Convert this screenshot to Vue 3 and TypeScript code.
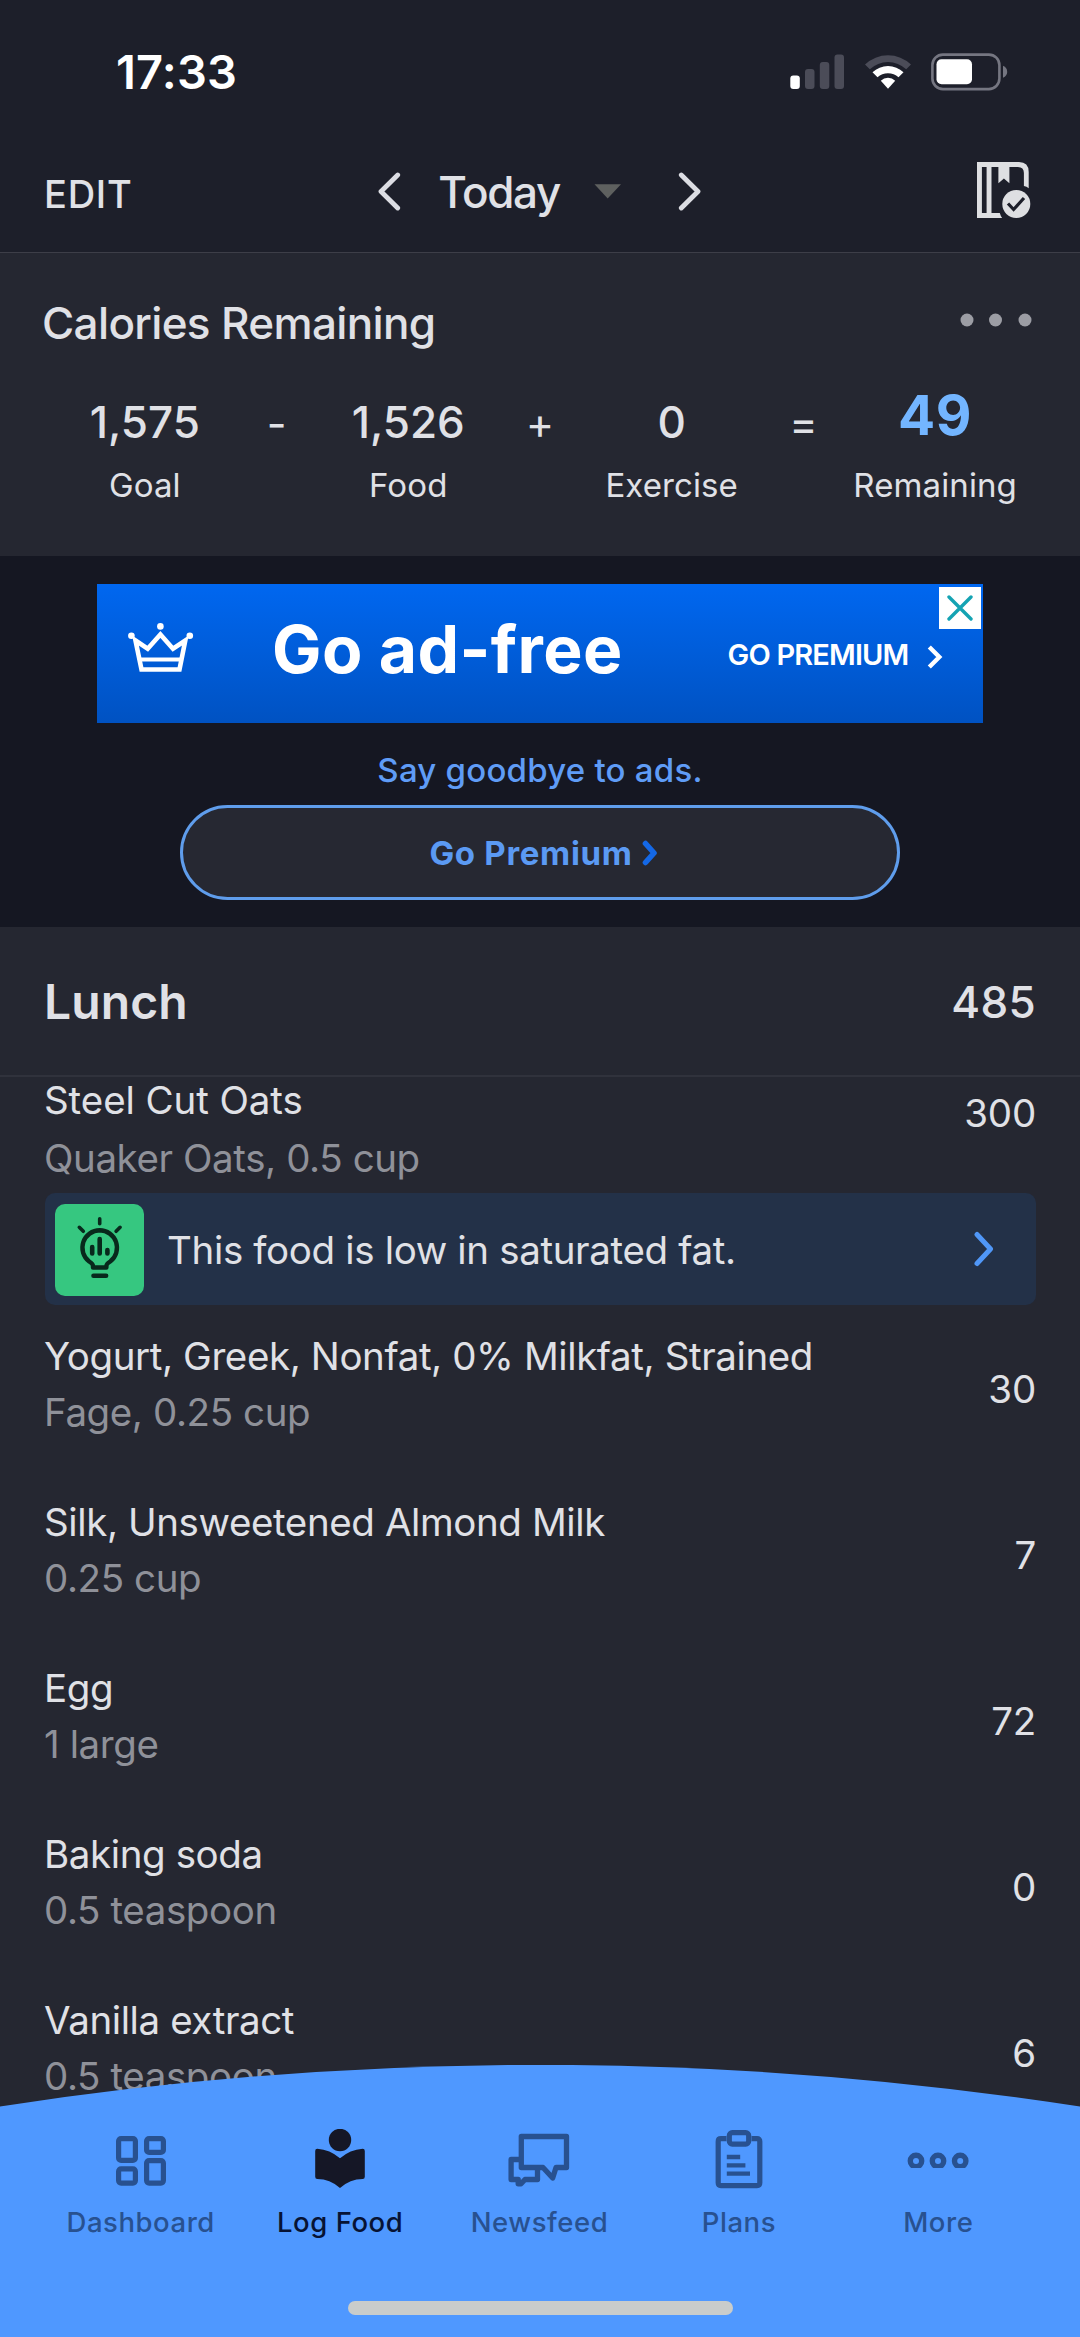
<script setup lang="ts">
interface Food {
  name: string
  detail: string
  calories: number
}

interface Tab {
  id: 'dashboard' | 'log' | 'news' | 'plans' | 'more'
  label: string
  active?: boolean
}

const foods: Food[] = [
  { name: 'Yogurt, Greek, Nonfat, 0% Milkfat, Strained', detail: 'Fage, 0.25 cup', calories: 30 },
  { name: 'Silk, Unsweetened Almond Milk', detail: '0.25 cup', calories: 7 },
  { name: 'Egg', detail: '1 large', calories: 72 },
  { name: 'Baking soda', detail: '0.5 teaspoon', calories: 0 },
  { name: 'Vanilla extract', detail: '0.5 teaspoon', calories: 6 },
]

const tabs: Tab[] = [
  { id: 'dashboard', label: 'Dashboard' },
  { id: 'log', label: 'Log Food', active: true },
  { id: 'news', label: 'Newsfeed' },
  { id: 'plans', label: 'Plans' },
  { id: 'more', label: 'More' },
]
</script>

<template>
  <div class="screen">
    <header class="header">
      <div class="status">
        <span class="time">17:33</span>
        <div class="status-icons">
          <svg class="signal" width="55" height="36" viewBox="0 0 55 36">
            <rect x="0.3" y="21.5" width="9.5" height="13.5" rx="3" fill="#fff" />
            <rect x="15" y="15" width="9.5" height="20" rx="3" fill="#4b4c58" />
            <rect x="29.8" y="8" width="9.5" height="27" rx="3" fill="#4b4c58" />
            <rect x="44.5" y="0.5" width="9.5" height="34.5" rx="3" fill="#4b4c58" />
          </svg>
          <svg class="wifi" width="48" height="36" viewBox="0 0 48 36">
            <path d="M1 10.5a33.5 33.5 0 0 1 46 0l-4.800 4.800a26.500 26.500 0 0 0-36.400 0z" fill="#4b4c58" />
            <path d="M8.5 18.300a22.500 22.500 0 0 1 31 0l-5 5a15.300 15.300 0 0 0-21 0z" fill="#fff" />
            <path d="M16.8 26.700a10.500 10.500 0 0 1 14.400 0L24 34.800z" fill="#fff" />
          </svg>
          <svg class="battery" width="77" height="38" viewBox="0 0 77 38">
            <rect x="1.4" y="1.6" width="67" height="34.5" rx="10.5" fill="none" stroke="#757681" stroke-width="2.6" />
            <rect x="5.5" y="6.3" width="35.5" height="25" rx="5" fill="#fff" />
            <path d="M72 12.700c5.600 1.800 5.600 10.200 0 12z" fill="#757681" />
          </svg>
        </div>
      </div>
      <div class="toolbar">
        <span class="edit">EDIT</span>
        <div class="date-nav">
          <svg width="23" height="39" viewBox="0 0 23 39" fill="none" stroke="#dcdde3" stroke-width="4.8" stroke-linecap="round" stroke-linejoin="round">
            <path d="M19.700 3L3 19.500 19.700 36" />
          </svg>
          <span class="today">Today</span>
          <svg class="caret" width="28" height="15" viewBox="0 0 28 15"><path d="M0.500 0.300h26.500L13.700 14.400z" fill="#5e605f" /></svg>
          <svg width="23" height="39" viewBox="0 0 23 39" fill="none" stroke="#dcdde3" stroke-width="4.8" stroke-linecap="round" stroke-linejoin="round">
            <path d="M3.300 3L20 19.500 3.300 36" />
          </svg>
        </div>
        <svg class="diary" width="54" height="57" viewBox="0 0 54 57">
          <path d="M0 0h42q9.700 0 9.700 10v16.300q-2-1.800-4.800-2.300V11q0-6-6-6H32.400v16.300l-5.500-4.700-5.500 4.700V5h-6.900v46h8.300q.8 3 2.300 5H0zM4.900 5v46h4.700V5z" fill="#dedfe2" fill-rule="evenodd" />
          <circle cx="39.3" cy="42" r="14" fill="#dedfe2" />
          <path d="M31 41.500l5.600 6L47 36" fill="none" stroke="#1d1f2a" stroke-width="3.2" />
        </svg>
      </div>
    </header>

    <section class="summary">
      <div class="summary-head">
        <h2>Calories Remaining</h2>
        <svg width="74" height="14" viewBox="0 0 74 14" fill="#9c9da4">
          <circle cx="8" cy="7" r="6.5" /><circle cx="36.5" cy="7" r="6.5" /><circle cx="66" cy="7" r="6.5" />
        </svg>
      </div>
      <div class="equation">
        <div class="term"><b>1,575</b><span>Goal</span></div>
        <div class="op">-</div>
        <div class="term"><b>1,526</b><span>Food</span></div>
        <div class="op">+</div>
        <div class="term"><b>0</b><span>Exercise</span></div>
        <div class="op">=</div>
        <div class="term total"><b>49</b><span>Remaining</span></div>
      </div>
    </section>

    <section class="promo">
      <div class="banner">
        <svg class="crown" width="66" height="52" viewBox="0 0 66 52" fill="none" stroke="#fff" stroke-width="4.6">
          <path d="M7.500 17.500l12.200 8.200L32.400 11.500 45 25.700l12.300-8.200L51.500 46.500H13.500z" />
          <path d="M11 36.500h43" stroke-width="4" />
          <g fill="#fff" stroke="none"><circle cx="3.4" cy="12.7" r="3.3" /><circle cx="32.4" cy="3.4" r="3.3" /><circle cx="61.8" cy="12.7" r="3.3" /></g>
        </svg>
        <span class="banner-title">Go ad-free</span>
        <span class="banner-cta">GO PREMIUM</span>
        <svg class="banner-arrow" width="16" height="26" viewBox="0 0 16 26"><path d="M2.300 3L12.300 13 2.300 23" fill="none" stroke="#fff" stroke-width="4.4" /></svg>
        <div class="close">
          <svg width="26" height="26" viewBox="0 0 26 26"><path d="M2 2l22 22M24 2L2 24" stroke="#14a3b3" stroke-width="3.4" stroke-linecap="round" /></svg>
        </div>
      </div>
      <p class="goodbye">Say goodbye to ads.</p>
      <div class="premium">
        <span>Go Premium</span>
        <svg width="16" height="26" viewBox="0 0 16 26"><path d="M3.500 3.500l8.500 9.500-8.500 9.500" fill="none" stroke="#1468e6" stroke-width="5.6" stroke-linecap="round" stroke-linejoin="round" /></svg>
      </div>
    </section>

    <section class="meal">
      <div class="meal-head"><h3>Lunch</h3><span>485</span></div>
      <div class="first">
        <div>
          <div class="name">Steel Cut Oats</div>
          <div class="detail">Quaker Oats, 0.5 cup</div>
        </div>
        <div class="cal">300</div>
      </div>
      <div class="tip">
        <div class="tip-icon">
          <svg width="89" height="92" viewBox="0 0 89 92" fill="none" stroke="#08291c" stroke-linecap="round" stroke-linejoin="round">
            <path stroke-width="4.4" d="M44.700 26.300a17.400 17.400 0 0 0-10.500 31.200q3.800 2.500 3.800 4.300v1.700h13.400v-1.700q0-1.800 3.800-4.300A17.400 17.400 0 0 0 44.700 26.300z" />
            <path stroke-width="4.6" d="M38.500 71.800h12.600M37.200 43v6.500M44.700 35v14.500M52.400 46v3.500" />
            <path stroke-width="3.6" d="M44.700 14.700v5M24.300 23.300l4 4M65.100 23.300l-4 4" />
          </svg>
        </div>
        <span>This food is low in saturated fat.</span>
        <svg class="tip-arrow" width="22" height="36" viewBox="0 0 22 36"><path d="M4 3.500L17.500 18 4 32.500" fill="none" stroke="#5097f7" stroke-width="5" stroke-linecap="round" stroke-linejoin="round" /></svg>
      </div>
      <div v-for="food in foods" :key="food.name" class="row">
        <div>
          <div class="name">{{ food.name }}</div>
          <div class="detail">{{ food.detail }}</div>
        </div>
        <div class="cal">{{ food.calories }}</div>
      </div>
    </section>

    <nav class="nav">
      <svg class="curve" width="1080" height="43" viewBox="0 0 1080 43"><path d="M0 41.500A3542 3542 0 0 1 1080 41.500V43H0z" fill="#4f98ff" /></svg>
      <div class="nav-body">
        <div class="tabs">
          <div v-for="tab in tabs" :key="tab.id" class="tab" :class="{ active: tab.active }">
            <svg v-if="tab.id === 'dashboard'" width="50" height="60" viewBox="0 0 50 60" fill="none" stroke="currentColor" stroke-width="5.2">
              <rect x="2.6" y="9.6" width="16.8" height="21.8" rx="2.5" />
              <rect x="2.6" y="39.9" width="16.8" height="14.2" rx="2.5" />
              <rect x="30.6" y="9.6" width="16.8" height="13.8" rx="2.5" />
              <rect x="30.6" y="31.6" width="16.8" height="22.5" rx="2.5" />
            </svg>
            <svg v-else-if="tab.id === 'log'" width="50" height="60" viewBox="0 0 50 60" fill="currentColor">
              <circle cx="25" cy="11" r="11.2" />
              <path d="M2.300 19.700Q15 20.500 25 29.300 35 20.500 47.700 19.700 49.800 19.700 49.800 22V47.700Q49.800 50 47.700 50 35 50 25 59 15 50 2.300 50 .2 50 .2 47.700V22Q.2 19.700 2.300 19.700z" />
            </svg>
            <svg v-else-if="tab.id === 'news'" width="62" height="60" viewBox="0 0 62 60" fill="none" stroke="currentColor" stroke-width="5.3" stroke-linejoin="round">
              <path d="M13.300 7.500H58.500V38.500H48L44.700 49 35 38.500H13.300z" />
              <path d="M13 30.500H3.100V50.500H10.200V54.800H13L17 50.500H29.500V40" />
            </svg>
            <svg v-else-if="tab.id === 'plans'" width="48" height="60" viewBox="0 0 48 60" fill="none" stroke="currentColor" stroke-width="5.2">
              <path d="M11.500 9.700H6Q3.200 9.700 3.200 12.500V53.800Q3.200 56.600 6 56.600H42Q44.800 56.600 44.800 53.800V12.500Q44.800 9.700 42 9.700H36.500" />
              <rect x="14.3" y="3.7" width="19.4" height="11.4" rx="3" />
              <path d="M11.800 28h13.400M11.800 36.300h18.600M11.800 44.700h23.200" stroke-width="4.3" />
            </svg>
            <svg v-else class="more-icon" width="64" height="60" viewBox="0 0 64 60" fill="none" stroke="currentColor" stroke-width="5.4">
              <circle cx="10" cy="32" r="5.7" /><circle cx="32" cy="32" r="5.7" /><circle cx="54.2" cy="32" r="5.7" />
            </svg>
            <span>{{ tab.label }}</span>
          </div>
        </div>
        <div class="home-bar"></div>
      </div>
    </nav>
  </div>
</template>

<style>
body { background: #252731; }
</style>

<style scoped>
.screen {
  position: relative;
  width: 1080px;
  height: 2337px;
  overflow: hidden;
  background: #252731;
  color: #e0e1e6;
  font-family: Inter, 'Liberation Sans', sans-serif;
}
svg { display: block; flex: none; }
h2, h3, p { margin: 0; font-weight: inherit; }

.header { height: 253px; box-sizing: border-box; background: #1d1f2a; border-bottom: 1px solid #3d3e48; }
.status { height: 144px; display: flex; justify-content: space-between; align-items: center; padding: 0 72px 0 116px; box-sizing: border-box; }
.time { font-size: 47px; font-weight: 600; color: #fff; letter-spacing: 0.2px; line-height: 60px; }
.status-icons { display: flex; align-items: center; }
.wifi { margin-left: 19px; }
.battery { margin-left: 19px; }
.toolbar { height: 94px; display: grid; grid-template-columns: 1fr auto 1fr; align-items: center; padding: 0 49px 0 44px; }
.edit { font-size: 38px; font-weight: 500; letter-spacing: 0.75px; padding-top: 6px; }
.date-nav { display: flex; align-items: center; margin-left: 4px; }
.today { font-size: 44px; font-weight: 500; letter-spacing: -1.4px; margin-left: 37px; line-height: 50px; padding-top: 1px; }
.caret { margin: 1px 56px 0 34px; }
.diary { justify-self: end; margin-top: -2px; }

.summary { height: 303px; padding-top: 44px; box-sizing: border-box; }
.summary-head { display: flex; justify-content: space-between; height: 52px; padding: 0 47px 0 42px; }
.summary-head h2 { font-size: 44px; font-weight: 500; letter-spacing: -0.65px; line-height: 52px; }
.summary-head svg { margin-top: 16px; }
.equation { display: grid; grid-template-columns: repeat(7, minmax(0, 1fr)); padding: 0 79px; margin-top: 47px; }
.term { display: flex; flex-direction: column; align-items: center; white-space: nowrap; }
.term b { font-size: 44px; font-weight: 500; line-height: 52px; }
.term span { font-size: 33px; line-height: 40px; margin-top: 17px; letter-spacing: 0.1px; }
.total b { font-size: 55px; font-weight: 700; color: #73b5ff; letter-spacing: 0.6px; position: relative; top: -7px; }
.op { text-align: center; font-size: 43px; line-height: 54px; }

.promo { height: 371px; padding-top: 28px; box-sizing: border-box; background: #151722; display: flex; flex-direction: column; align-items: center; }
.banner { position: relative; width: 886px; height: 139px; box-sizing: border-box; padding-left: 31px; display: flex; align-items: center; background: linear-gradient(#0067f0, #0052c2); color: #fff; white-space: nowrap; }
.crown { margin-top: -9px; }
.banner-title { font-size: 66px; font-weight: 700; letter-spacing: 0.4px; line-height: 80px; margin: 0 0 10px 78px; }
.banner-cta { font-size: 29px; font-weight: 600; letter-spacing: -0.85px; line-height: 36px; margin: 2px 0 0 105px; }
.banner-arrow { margin: 6px 0 0 19px; }
.close { position: absolute; top: 3px; right: 2px; width: 42px; height: 42px; background: #fff; display: grid; place-items: center; }
.goodbye { margin-top: 27px; font-size: 33px; font-weight: 500; line-height: 40px; letter-spacing: 0.23px; color: #5f9cf6; }
.premium { width: 720px; height: 95px; margin-top: 15px; box-sizing: border-box; border: 3px solid #5f9dec; border-radius: 48px; background: #262832; display: flex; align-items: center; justify-content: center; gap: 9px; color: #5b9af3; font-size: 33px; font-weight: 700; letter-spacing: 0.7px; padding-left: 7px; }

.meal-head { height: 150px; box-sizing: border-box; border-bottom: 2px solid #30323c; padding: 0 44px; display: flex; justify-content: space-between; align-items: center; }
.meal-head h3 { font-size: 48px; font-weight: 600; letter-spacing: 0.1px; padding-top: 1px; }
.meal-head span { font-size: 44px; font-weight: 500; letter-spacing: 0.3px; padding-top: 2px; }
.first, .row { display: flex; justify-content: space-between; padding: 0 44px; }
.first { height: 116px; }
.name, .detail, .cal { font-size: 38.5px; line-height: 50px; letter-spacing: -0.4px; white-space: nowrap; }
.detail { color: #8f9199; }
.cal { letter-spacing: -0.2px; }
.first .name { margin-top: -2px; letter-spacing: -0.08px; }
.first .detail { margin-top: 8px; }
.first .cal { margin-top: 11px; }
.tip { height: 112px; margin: 0 44px 0 45px; border-radius: 10px; background: #233148; display: flex; align-items: center; }
.tip-icon { width: 89px; height: 92px; margin: 2px 0 0 10px; border-radius: 10px; background: #36c780; }
.tip > span { font-size: 38.5px; letter-spacing: -0.35px; margin-left: 23px; padding-top: 2px; }
.tip-arrow { margin-left: auto; margin-right: 41px; }
.row { height: 166px; align-items: center; }
.row .name { margin-top: -8px; }
.row .detail { margin-top: 6.5px; }
.row .cal { padding-top: 2px; }

.nav { position: absolute; left: 0; bottom: 0; width: 1080px; height: 272px; }
.nav-body { height: 230px; margin-top: -1px; background: #4f98ff; }
.tabs { display: grid; grid-template-columns: repeat(5, minmax(0, 1fr)); padding: 22px 42px 0 41px; }
.tab { display: flex; flex-direction: column; align-items: center; color: #285190; font-size: 27.5px; font-weight: 500; }
.tab span { line-height: 34px; margin-top: 16px; letter-spacing: 0.55px; white-space: nowrap; }
.tab.active { color: #151726; }
.tab.active span { color: #071334; }
.more-icon { clip-path: inset(0 0 21px 0); }
.home-bar { width: 385px; height: 14px; margin: 62px auto 0; border-radius: 7px; background: #c9cccb; }
</style>
